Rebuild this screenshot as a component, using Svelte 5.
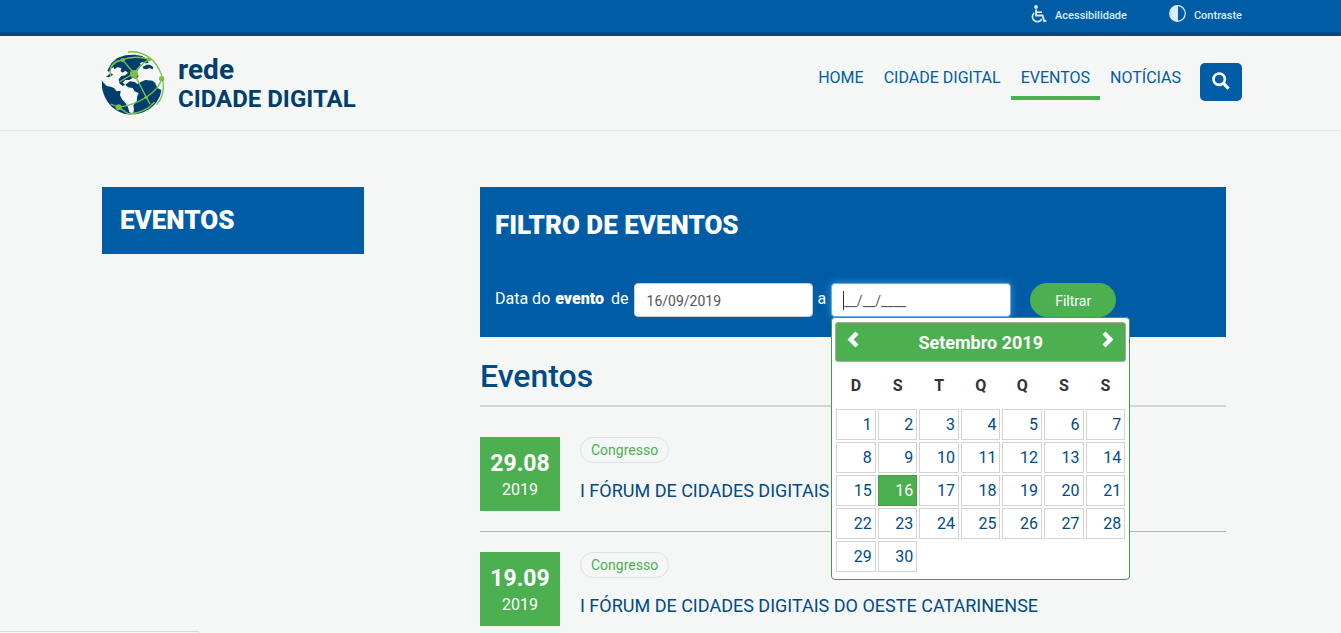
<script>
  const nav = [
    { label: 'HOME' },
    { label: 'CIDADE DIGITAL' },
    { label: 'EVENTOS', active: true },
    { label: 'NOTÍCIAS' }
  ];
  const weekdays = ['D', 'S', 'T', 'Q', 'Q', 'S', 'S'];
  const weeks = [0, 1, 2, 3, 4].map((w) =>
    [1, 2, 3, 4, 5, 6, 7].map((d) => w * 7 + d).map((d) => (d <= 30 ? d : null))
  );
  const events = [
    { day: '29.08', year: '2019', type: 'Congresso', title: 'I FÓRUM DE CIDADES DIGITAIS' },
    { day: '19.09', year: '2019', type: 'Congresso', title: 'I FÓRUM DE CIDADES DIGITAIS DO OESTE CATARINENSE' }
  ];
  let from = $state('16/09/2019');
  let to = $state('__/__/____');
  let selected = $state(16);
</script>

<div class="topbar">
  <div class="wrap tools">
    <a href="#acessibilidade">
      <svg width="16" height="18" viewBox="0 0 16 18" aria-hidden="true">
        <circle cx="5" cy="2" r="1.9" fill="currentColor" />
        <path d="M5.1 4.5V10.5H11.6L13.2 16.2L15.4 15.6" fill="none" stroke="currentColor" stroke-width="1.9" />
        <path d="M5.5 7.2H11" fill="none" stroke="currentColor" stroke-width="1.6" />
        <path d="M3.2 7.8A5 5 0 1 0 10.8 14" fill="none" stroke="currentColor" stroke-width="1.7" />
      </svg>
      <span>Acessibilidade</span>
    </a>
    <a href="#contraste">
      <svg width="17" height="17" viewBox="0 0 17 17" aria-hidden="true">
        <circle cx="8.5" cy="8.5" r="7.8" fill="none" stroke="currentColor" stroke-width="1.2" />
        <path d="M9 .5A8 8 0 0 0 9 16.5Z" fill="currentColor" />
      </svg>
      <span>Contraste</span>
    </a>
  </div>
</div>

<header>
  <div class="wrap head">
    <a class="logo" href="#inicio">
      <svg width="64" height="64" viewBox="14 9 192 192" aria-hidden="true">
        <g fill="#003e6d">
          <path d="M30 68L42 46L60 30L84 22L112 20L134 24L150 34L154 44L144 46L136 42L128 46L132 54L124 62L118 72L124 84L118 92L106 90L96 96L84 96L76 104L84 110L76 114L66 106L64 94L72 84L84 82L92 74L84 68L76 74L70 70L72 60L60 58L52 64L48 58L40 62L36 72Z" />
          <path d="M136 56L148 50L158 50L168 58L166 64L156 60L148 64L138 62Z" />
          <path d="M26 86L40 76L48 80L34 88Z" />
          <path d="M12 96L20 106L28 114L40 116L50 120L58 130L70 128L68 142L74 154L84 164L92 178L96 192L106 199C56 202 12 160 12 96Z" />
          <path d="M84 110L98 100L112 102L120 108L130 102L144 96L166 98L174 106L180 120L192 126C188 164 152 198 106 199L110 186L108 172L118 160L120 144L124 136L112 130L106 120L92 118Z" />
        </g>
        <g fill="none" stroke="#7ac143" stroke-width="4">
          <path d="M92 12C138 6 178 36 193 82C203 118 196 150 178 170" />
          <path d="M40 84C34 60 44 44 72 36C98 26 130 26 156 34" />
          <path d="M42 54C54 40 66 36 76 38" />
          <path d="M76 36L110 76L146 146L158 168" />
          <path d="M156 34C134 46 120 62 110 76L66 102" />
          <path d="M193 92C184 130 130 168 64 178" />
          <path d="M40 168L64 178L92 197" />
          <path d="M92 197C124 198 152 184 172 162" />
        </g>
        <g fill="#7ac143">
          <circle cx="76" cy="36" r="6" /><circle cx="156" cy="34" r="6" />
          <circle cx="110" cy="78" r="12" /><circle cx="193" cy="92" r="8" />
          <circle cx="64" cy="178" r="9" /><circle cx="146" cy="148" r="5" />
        </g>
      </svg>
      <span class="brand"><span class="small">rede</span><span class="big">CIDADE DIGITAL</span></span>
    </a>
    <nav>
      {#each nav as item}
        <a class:active={item.active} href="#{item.label}">{item.label}</a>
      {/each}
      <button class="search" aria-label="Buscar">
        <svg width="18" height="18" viewBox="0 0 18 18" aria-hidden="true">
          <circle cx="7.2" cy="7.2" r="5.7" fill="none" stroke="currentColor" stroke-width="2.6" />
          <path d="M11.4 11.4L16.6 16.6" stroke="currentColor" stroke-width="3.2" />
        </svg>
      </button>
    </nav>
  </div>
</header>

<main class="wrap">
  <aside><h2>EVENTOS</h2></aside>
  <div class="content">
    <section class="filter">
      <h1>FILTRO DE EVENTOS</h1>
      <form onsubmit={(e) => e.preventDefault()}>
        <label for="from">Data do <b>evento</b> de</label>
        <input id="from" type="text" bind:value={from} />
        <label for="to">a</label>
        <div class="field">
          <input id="to" class="focus" type="text" bind:value={to} />
          <span class="caret"></span>
          <div class="picker">
            <div class="month">
              <button type="button" aria-label="Anterior">
                <svg width="12" height="17" viewBox="0 0 12 17"><path d="M10 2L3.6 8.5L10 15" fill="none" stroke="currentColor" stroke-width="4.4" /></svg>
              </button>
              <strong>Setembro 2019</strong>
              <button type="button" aria-label="Próximo">
                <svg width="12" height="17" viewBox="0 0 12 17"><path d="M2 2L8.4 8.5L2 15" fill="none" stroke="currentColor" stroke-width="4.4" /></svg>
              </button>
            </div>
            <table>
              <thead>
                <tr>{#each weekdays as d}<th>{d}</th>{/each}</tr>
              </thead>
              <tbody>
                {#each weeks as week}
                  <tr>
                    {#each week as d}
                      <td>{#if d}<button type="button" class:on={d === selected} onclick={() => (selected = d)}>{d}</button>{/if}</td>
                    {/each}
                  </tr>
                {/each}
              </tbody>
            </table>
          </div>
        </div>
        <button class="submit">Filtrar</button>
      </form>
    </section>

    <h2 class="title">Eventos</h2>
    <ul>
      {#each events as ev}
        <li>
          <div class="date"><b>{ev.day}</b><span>{ev.year}</span></div>
          <div class="info">
            <span class="tag">{ev.type}</span>
            <a href="#evento">{ev.title}</a>
          </div>
        </li>
      {/each}
    </ul>
  </div>
</main>
<div class="status"></div>

<style>
  :global(body) {
    background: #f5f7f6;
    font-family: Roboto, sans-serif;
    font-size: 16px;
    color: #333;
    overflow: hidden;
  }
  * { box-sizing: border-box; }
  a { text-decoration: none; color: inherit; }
  button, input { font-family: inherit; }
  h1, h2, ul { margin: 0; padding: 0; }
  .wrap {
    max-width: 1143px;
    margin: 0 auto;
    padding-left: 3px;
  }
  .topbar {
    background: #005ca5;
    border-bottom: 4px solid #004b85;
    color: #dcecff;
  }
  .tools {
    display: flex;
    justify-content: flex-end;
    gap: 42px;
    height: 32px;
    padding-top: 5px;
  }
  .tools a {
    display: flex;
    gap: 8px;
    height: 20px;
    font-size: 11px;
    line-height: 22px;
    font-weight: 500;
  }
  header { border-bottom: 1px solid #e6e8e7; }
  .head {
    display: flex;
    justify-content: space-between;
    align-items: flex-start;
    height: 94px;
  }
  .logo {
    display: flex;
    gap: 12px;
    padding-top: 15px;
    color: #003e6d;
  }
  .brand {
    display: flex;
    flex-direction: column;
    font-weight: 700;
    padding-top: 5px;
  }
  .small { font-size: 28px; line-height: 28px; }
  .big { font-size: 24px; line-height: 30px; }
  nav {
    display: flex;
    align-items: flex-start;
    padding-top: 27px;
  }
  nav a {
    padding: 5px 10px 8px;
    line-height: 20px;
    color: #005ca5;
    border-bottom: 4px solid transparent;
  }
  nav a.active { border-color: #4caf50; }
  .search {
    width: 42px;
    height: 38px;
    margin-left: 9px;
    padding: 0 0 2px;
    border: 0;
    border-radius: 5px;
    background: #005ca5;
    color: #fff;
    display: grid;
    place-items: center;
  }
  main.wrap {
    display: grid;
    grid-template-columns: 262px 1fr;
    gap: 116px;
    align-items: start;
    padding-top: 56px;
    padding-right: 16px;
  }
  aside {
    background: #005ca5;
    color: #fff;
    padding: 18px;
  }
  aside h2, .filter h1 {
    font-size: 26px;
    line-height: 31px;
    font-weight: 900;
  }
  .filter {
    background: #005ca5;
    color: #fff;
    padding: 23px 15px 20px;
  }
  form {
    display: flex;
    align-items: flex-start;
    margin-top: 42px;
  }
  form label {
    line-height: 32px;
    margin-right: 5px;
    white-space: nowrap;
  }
  form b {
    font-weight: 900;
    margin: 0 3px 0 1px;
  }
  form input {
    width: 179px;
    height: 34px;
    padding: 2px 12px 0;
    margin-right: 5px;
    border: 1px solid #ccc;
    border-radius: 4px;
    font-size: 14px;
    color: #555;
    background: #fff;
    outline: 0;
  }
  .field { position: relative; display: flex; }
  .field input {
    width: 180px;
    margin: 0;
    border-color: #66afe9;
    box-shadow: 0 0 8px rgba(102, 175, 233, 0.6);
  }
  .caret {
    position: absolute;
    left: 12px;
    top: 8px;
    width: 1px;
    height: 19px;
    background: #333;
  }
  .submit {
    height: 34px;
    margin-left: 19px;
    padding: 2px 25px 0;
    border: 0;
    border-radius: 17px;
    background: #4caf50;
    color: #fff;
    font-size: 14px;
  }
  .picker {
    position: absolute;
    z-index: 2;
    left: 0;
    top: 34px;
    width: 299px;
    padding: 4px 3px 6px;
    border: 1px solid #3f9e43;
    border-radius: 4px;
    background: #fff;
    color: #333;
  }
  .month {
    display: flex;
    align-items: center;
    justify-content: space-between;
    height: 40px;
    padding: 0 11px;
    border: 1px solid #aaa;
    border-radius: 3px;
    background: #4caf50;
    color: #fff;
    font-size: 18px;
  }
  .month button {
    height: 22px;
    padding: 0 0 4px;
    border: 0;
    background: none;
    color: #fff;
    display: grid;
  }
  table {
    width: 100%;
    border-collapse: collapse;
    table-layout: fixed;
  }
  th {
    height: 46px;
    padding: 0;
    font-weight: 700;
  }
  td { padding: 1px; height: 33px; }
  td button {
    display: block;
    width: 100%;
    height: 31px;
    padding: 0 3px;
    border: 1px solid #d3d3d3;
    background: #fff;
    color: #004b85;
    font-size: 16px;
    text-align: right;
  }
  td .on {
    background: #4caf50;
    border-color: #3f9e43;
    color: #fff;
  }
  .title {
    padding: 21px 0 11px;
    border-bottom: 2px solid #d3d5d4;
    color: #004b85;
    font-size: 32px;
    line-height: 36px;
    font-weight: 500;
  }
  ul { list-style: none; padding-top: 10px; }
  li {
    display: flex;
    gap: 20px;
    padding: 20px 0;
    border-bottom: 1px solid #b3b5b4;
  }
  .date {
    width: 80px;
    height: 74px;
    padding-top: 14px;
    background: #4caf50;
    color: #fff;
    text-align: center;
  }
  .date b, .date span { display: block; line-height: 26px; }
  .date b { font-size: 23px; }
  .info { display: flex; flex-direction: column; align-items: flex-start; gap: 16px; }
  .tag {
    padding: 0 10px;
    border: 1px solid #dfe1e0;
    border-radius: 13px;
    color: #4caf50;
    font-size: 14px;
    line-height: 24px;
  }
  .info a {
    color: #004b85;
    font-size: 18px;
    line-height: 24px;
    white-space: nowrap;
  }
  .status {
    position: fixed;
    left: 0;
    bottom: 0;
    width: 199px;
    height: 2px;
    border: 1px solid #d9dbda;
    border-width: 1px 1px 0 0;
  }
</style>
